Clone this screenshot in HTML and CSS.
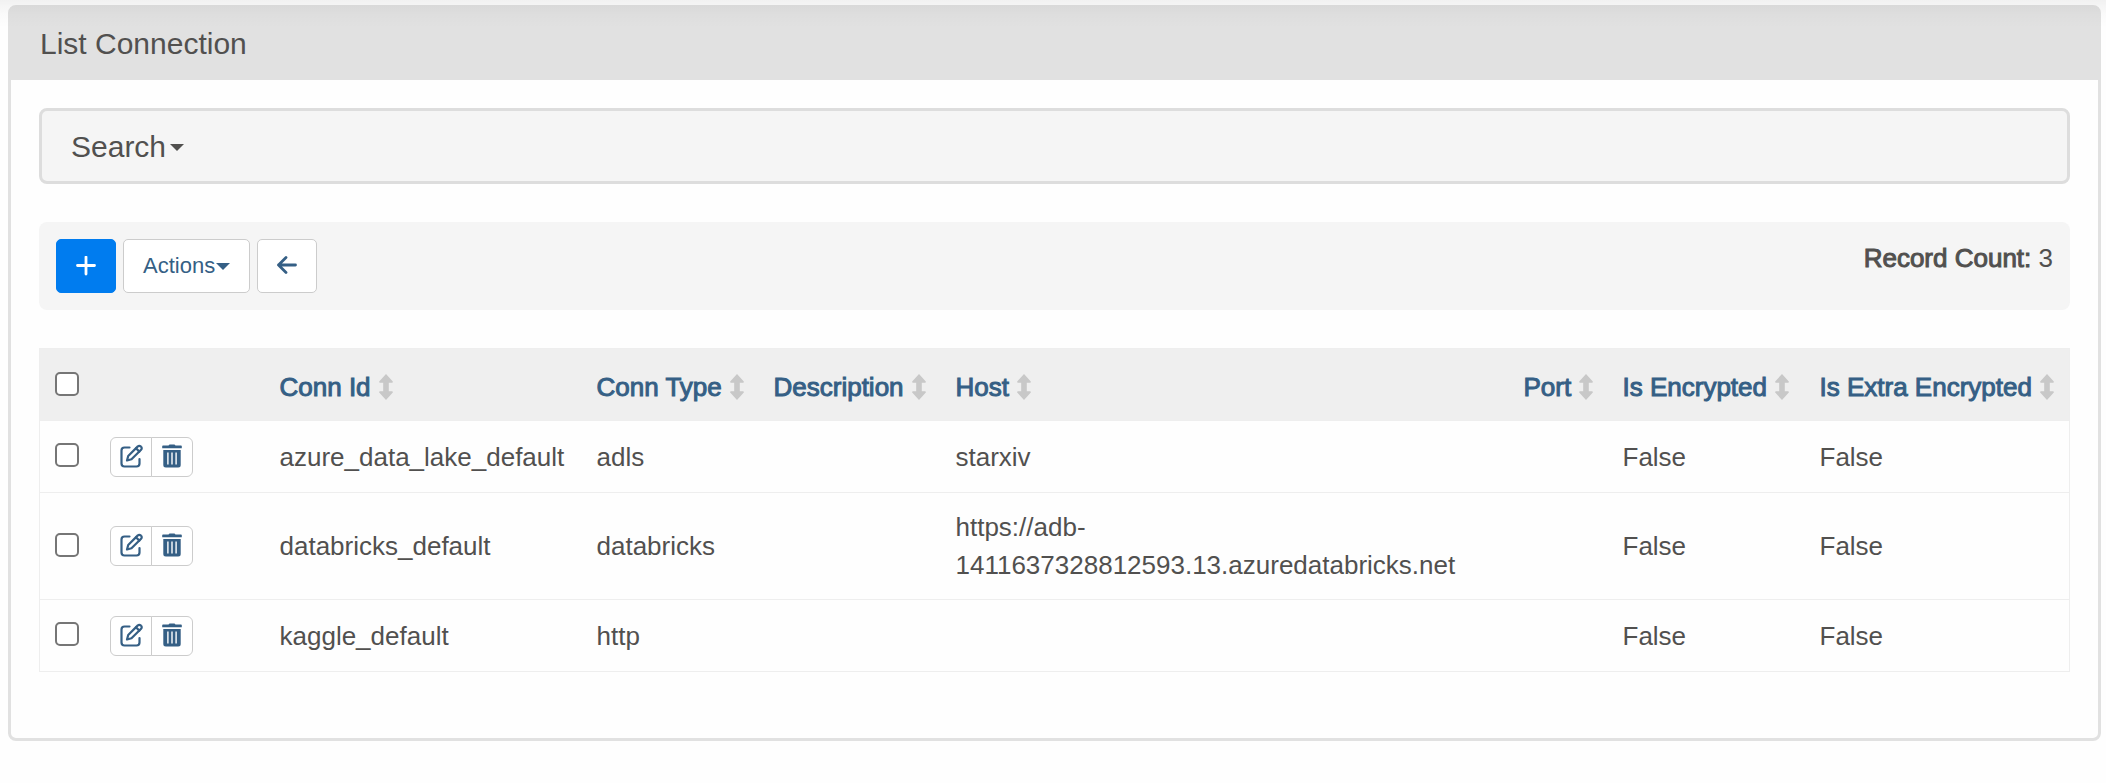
FILE: index.html
```html
<!DOCTYPE html>
<html lang="en">
<head>
<meta charset="utf-8">
<title>List Connection</title>
<link rel="stylesheet" href="styles.css">
</head>
<body>
<svg class="sprite" aria-hidden="true">
  <symbol id="edit" viewBox="0 0 24 24">
    <g fill="none" stroke="currentColor" stroke-width="2.200" stroke-linecap="round" stroke-linejoin="round">
      <path d="M10.500 3.500H5.500a3 3 0 0 0-3 3v13a3 3 0 0 0 3 3h12a3 3 0 0 0 3-3V15"/>
      <path d="M8 16.500l1.200-4.500L18.800 2.400a2 2 0 0 1 2.900 0l.4.400a2 2 0 0 1 0 2.900L12.500 15.300z"/>
      <path d="M17 4.300l3.300 3.300"/>
    </g>
  </symbol>
  <symbol id="trash" viewBox="0 0 20 24">
    <path fill="currentColor" fill-rule="evenodd" d="M1 1.500h5.500L7.500.5h5l1 1H19a.8.8 0 0 1 .8.800v2H.2v-2A.8.800 0 0 1 1 1.500zM1.300 6h17.400V21a2.500 2.500 0 0 1-2.500 2.500H3.800A2.500 2.500 0 0 1 1.300 21zM5.200 8.500V20.500h1.400V8.500zM9.300 8.500V20.500h1.400V8.500zM13.400 8.500V20.500h1.400V8.500z"/>
  </symbol>
  <symbol id="sort" viewBox="0 0 14 26">
    <path fill="currentColor" d="M7 0l6.600 7.200c.6.700.3 1.600-.7 1.600H9.800v8.400h3.100c1 0 1.300.9.700 1.600L7 26 .4 18.800c-.6-.7-.3-1.600.7-1.600h3.100V8.800H1.100C.1 8.800-.2 7.900.4 7.200z"/>
  </symbol>
</svg>
<div class="navbar-shadow"></div>
<main class="panel">
  <header class="panel-heading"><h1>List Connection</h1></header>
  <div class="panel-body">
    <button class="search" type="button">Search<span class="caret"></span></button>
    <div class="toolbar">
      <button class="btn btn-primary" type="button" aria-label="Add">
        <svg width="20" height="20" viewBox="0 0 20 20"><path d="M10 1v17M1.500 9.500h17" fill="none" stroke="currentColor" stroke-width="2.800" stroke-linecap="round"/></svg>
      </button>
      <button class="btn" type="button">Actions<span class="caret"></span></button>
      <button class="btn" type="button" aria-label="Back">
        <svg width="20" height="20" viewBox="0 0 20 20"><path d="M9 1.500L1.500 9 9 16.500M1.500 9h17" fill="none" stroke="currentColor" stroke-width="2.800" stroke-linecap="round" stroke-linejoin="round"/></svg>
      </button>
      <div class="count"><span class="strong">Record Count:</span> 3</div>
    </div>
    <table class="list">
      <colgroup><col class="c-check"><col class="c-tools"><col class="c-id"><col class="c-type"><col class="c-desc"><col><col class="c-port"><col class="c-enc"><col class="c-extra"></colgroup>
      <thead>
        <tr>
          <th><input type="checkbox" aria-label="Select all"></th>
          <th></th>
          <th><a href="#">Conn Id<svg class="sort"><use href="#sort"/></svg></a></th>
          <th><a href="#">Conn Type<svg class="sort"><use href="#sort"/></svg></a></th>
          <th><a href="#">Description<svg class="sort"><use href="#sort"/></svg></a></th>
          <th><a href="#">Host<svg class="sort"><use href="#sort"/></svg></a></th>
          <th><a href="#">Port<svg class="sort"><use href="#sort"/></svg></a></th>
          <th><a href="#">Is Encrypted<svg class="sort"><use href="#sort"/></svg></a></th>
          <th><a href="#">Is Extra Encrypted<svg class="sort"><use href="#sort"/></svg></a></th>
        </tr>
      </thead>
      <tbody>
        <tr>
          <td><input type="checkbox" aria-label="Select azure_data_lake_default"></td>
          <td><div class="tools"><button type="button" aria-label="Edit"><svg class="icon"><use href="#edit"/></svg></button><button type="button" aria-label="Delete"><svg class="icon"><use href="#trash"/></svg></button></div></td>
          <td>azure_data_lake_default</td><td>adls</td><td></td><td>starxiv</td><td></td><td>False</td><td>False</td>
        </tr>
        <tr>
          <td><input type="checkbox" aria-label="Select databricks_default"></td>
          <td><div class="tools"><button type="button" aria-label="Edit"><svg class="icon"><use href="#edit"/></svg></button><button type="button" aria-label="Delete"><svg class="icon"><use href="#trash"/></svg></button></div></td>
          <td>databricks_default</td><td>databricks</td><td></td><td>https://adb-<wbr>1411637328812593.13.azuredatabricks.net</td><td></td><td>False</td><td>False</td>
        </tr>
        <tr>
          <td><input type="checkbox" aria-label="Select kaggle_default"></td>
          <td><div class="tools"><button type="button" aria-label="Edit"><svg class="icon"><use href="#edit"/></svg></button><button type="button" aria-label="Delete"><svg class="icon"><use href="#trash"/></svg></button></div></td>
          <td>kaggle_default</td><td>http</td><td></td><td></td><td></td><td>False</td><td>False</td>
        </tr>
      </tbody>
    </table>
  </div>
</main>
</body>
</html>
```
FILE: styles.css
```css
* { box-sizing: border-box; }

body {
  margin: 0;
  padding: 5px 5px 40px 8px;
  background: #fefefe;
  color: #51504f;
  font: 26px/38px "Liberation Sans", Arial, Helvetica, sans-serif;
}

button { font: inherit; color: inherit; cursor: pointer; }

.sprite { position: absolute; width: 0; height: 0; }

.navbar-shadow {
  position: absolute;
  top: 0;
  left: 0;
  right: 0;
  height: 28px;
  background: linear-gradient(rgba(0, 0, 0, .05), rgba(0, 0, 0, .015) 50%, transparent);
}

.panel { border: 3px solid #e1e1e1; border-radius: 8px; }
.panel-heading { background: #e1e1e1; padding: 17px 29px; }
.panel-heading h1 { margin: 0; font-size: 30px; line-height: 38px; font-weight: 400; }
.panel-body { padding: 28px 28px 66px; }

.search {
  display: flex;
  align-items: center;
  width: 100%;
  padding: 17px 29px 15px;
  background: #f5f5f5;
  border: 3px solid #ddd;
  border-radius: 8px;
  font-size: 30px;
  line-height: 38px;
}

.caret {
  display: inline-block;
  margin-left: 4px;
  border: 7px solid transparent;
  border-top-color: currentColor;
  border-bottom: 0;
}

.toolbar {
  display: flex;
  align-items: flex-start;
  gap: 7px;
  margin: 38px 0;
  padding: 17px;
  background: #f5f5f5;
  border-radius: 8px;
}

.btn {
  display: flex;
  align-items: center;
  height: 54px;
  padding: 0 19px;
  background: #fff;
  border: 1px solid #ccc;
  border-radius: 5px;
  color: #355f85;
  font-size: 22px;
}
.btn .caret { margin-left: 1px; }
.btn-primary { background: #007cef; border-color: #007cef; color: #fff; }

.count { margin-left: auto; }
.strong, .list th { -webkit-text-stroke: 1px currentColor; }

.list {
  width: 100%;
  table-layout: fixed;
  border-collapse: collapse;
  border: 1px solid #eee;
}
.c-check { width: 56px; }
.c-tools { width: 170px; }
.c-id { width: 317px; }
.c-type { width: 177px; }
.c-desc { width: 182px; }
.c-port { width: 99px; }
.c-enc { width: 197px; }
.c-extra { width: 264px; }

.list th, .list td {
  padding: 15px 0 15px 14px;
  text-align: left;
  vertical-align: middle;
  border-bottom: 1px solid #eee;
}
.list tbody tr { height: 72px; }
.list th { background: #efefef; font-weight: 400; padding: 19px 0 14px 14px; }
.list th a {
  display: flex;
  align-items: center;
  gap: 8px;
  color: #355f85;
  text-decoration: none;
  white-space: nowrap;
}
.sort { width: 14px; height: 26px; color: #c8c8c8; }

.list input {
  display: block;
  appearance: none;
  width: 24px;
  height: 24px;
  margin: 0 0 3px 1px;
  background: #fff;
  border: 2px solid #767676;
  border-radius: 5px;
}
.list th input { margin-bottom: 7px; }

.tools { display: flex; }
.tools button {
  display: flex;
  align-items: center;
  justify-content: center;
  width: 42px;
  height: 40px;
  padding: 0 0 2px;
  background: #fff;
  border: 1px solid #ccc;
  border-radius: 6px 0 0 6px;
  color: #355f85;
}
.tools button + button { margin-left: -1px; border-radius: 0 6px 6px 0; }
.icon { width: 24px; height: 24px; }
```
